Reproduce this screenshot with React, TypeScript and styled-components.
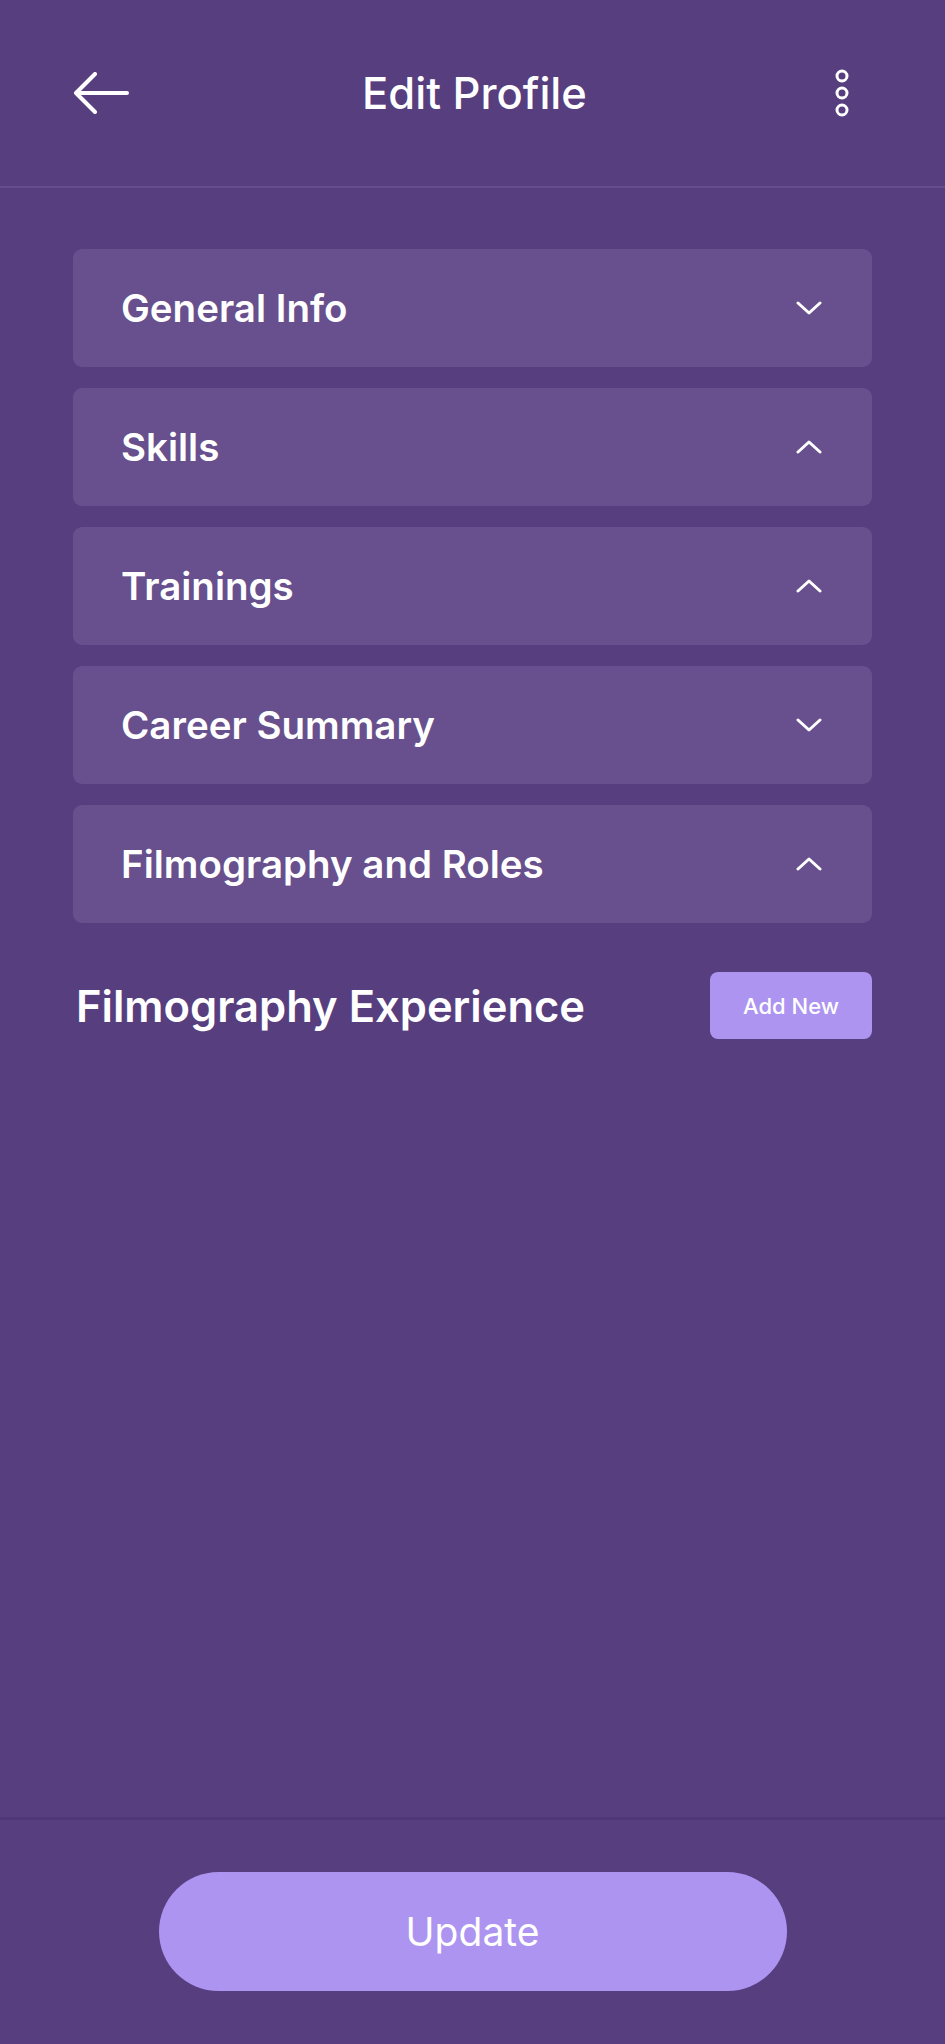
import { useState } from 'react'
import styled, { createGlobalStyle } from 'styled-components'

interface Section {
  id: string;
  title: string;
  open: boolean;
}

const sections: Section[] = [
  { id: 'general', title: 'General Info', open: false },
  { id: 'skills', title: 'Skills', open: true },
  { id: 'trainings', title: 'Trainings', open: true },
  { id: 'career', title: 'Career Summary', open: false },
  { id: 'film', title: 'Filmography and Roles', open: true },
];

function App() {
  const [list, setList] = useState<Section[]>(sections);

  const toggle = (id: string) => {
    setList(list.map((s) => (s.id === id ? { ...s, open: !s.open } : s)));
  };

  return (
    <Wrap>
      <GlobalStyle />
      <Header>
        <IconButton aria-label="back">
          <svg width="56" height="42" viewBox="0 0 56 42" fill="none">
            <path d="M54 21H3M22 2L3 21l19 19" stroke="#fff" strokeWidth="4" strokeLinecap="round" strokeLinejoin="round" />
          </svg>
        </IconButton>
        <Title>Edit Profile</Title>
        <IconButton aria-label="more" $right>
          <svg width="16" height="50" viewBox="0 0 16 50" fill="none">
            <circle cx="8" cy="8" r="5" stroke="#fff" strokeWidth="3" />
            <circle cx="8" cy="25" r="5" stroke="#fff" strokeWidth="3" />
            <circle cx="8" cy="42" r="5" stroke="#fff" strokeWidth="3" />
          </svg>
        </IconButton>
      </Header>

      <Content>
        {list.map((s) => (
          <Card key={s.id} onClick={() => toggle(s.id)}>
            <CardTitle>{s.title}</CardTitle>
            <svg width="26" height="16" viewBox="0 0 26 16" fill="none">
              <path
                d={s.open ? 'M2 13L13 3l11 10' : 'M2 3l11 10L24 3'}
                stroke="#fff"
                strokeWidth="3"
                strokeLinecap="round"
                strokeLinejoin="round"
              />
            </svg>
          </Card>
        ))}

        <SectionRow>
          <SectionTitle>Filmography Experience</SectionTitle>
          <SmallButton>Add New</SmallButton>
        </SectionRow>
      </Content>

      <Footer>
        <UpdateButton>Update</UpdateButton>
      </Footer>
    </Wrap>
  )
}

const GlobalStyle = createGlobalStyle`
  html, body {
    margin: 0;
    padding: 0;
    background: #563e7f;
  }
  * {
    box-sizing: border-box;
  }
`;

const Wrap = styled.div`
  height: 2044px;
  background: #563e7f;
  display: flex;
  flex-direction: column;
  font-family: Inter, "Noto Sans", sans-serif;
  color: #fff;
`;

const Header = styled.div`
  height: 188px;
  padding: 0 95px 0 73px;
  display: grid;
  grid-template-columns: 1fr auto 1fr;
  align-items: center;
  border-bottom: 2px solid #654d8a;
`;

const IconButton = styled.button<{ $right?: boolean }>`
  background: none;
  border: none;
  padding: 0;
  display: flex;
  align-items: center;
  justify-self: ${(p) => (p.$right ? 'end' : 'start')};
  cursor: pointer;
`;

const Title = styled.h1`
  margin: 0 0 0 26px;
  font-size: 43.5px;
  font-weight: 500;
`;

const Content = styled.div`
  flex: 1;
  padding: 61px 73px 0 73px;
  display: flex;
  flex-direction: column;
  gap: 21px;
`;

const Card = styled.div`
  height: 118px;
  border-radius: 9px;
  background: #67508d;
  padding: 0 50px 0 48px;
  display: flex;
  align-items: center;
  justify-content: space-between;
  cursor: pointer;
`;

const CardTitle = styled.span`
  font-size: 38.5px;
  font-weight: 600;
`;

const SectionRow = styled.div`
  margin-top: 28px;
  display: flex;
  align-items: center;
  justify-content: space-between;
  padding-left: 3px;
`;

const SectionTitle = styled.h2`
  margin: 0;
  font-size: 43.5px;
  font-weight: 600;
`;

const SmallButton = styled.button`
  width: 162px;
  height: 67px;
  border: none;
  border-radius: 8px;
  background: #ad94f0;
  color: #fff;
  font-family: Inter, "Noto Sans", sans-serif;
  font-size: 22px;
  font-weight: 500;
`;

const Footer = styled.div`
  height: 227px;
  border-top: 3px solid #4e3775;
  display: flex;
  justify-content: center;
  padding-top: 52px;
`;

const UpdateButton = styled.button`
  width: 628px;
  height: 119px;
  border: none;
  border-radius: 60px;
  background: #ad94f0;
  color: #fff;
  font-family: Inter, "Noto Sans", sans-serif;
  font-size: 39px;
  font-weight: 400;
`;

export default App
